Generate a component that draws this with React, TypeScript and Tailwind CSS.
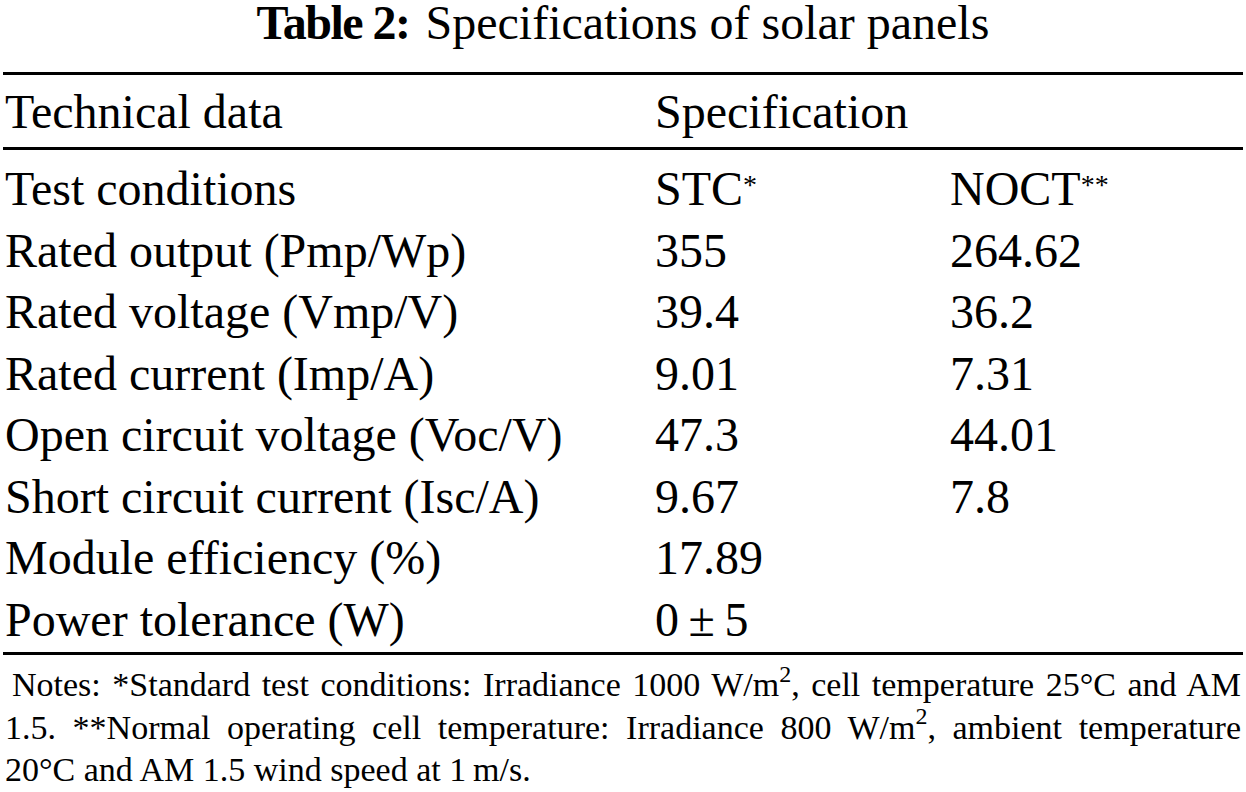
import React from 'react';

const rows: [string, React.ReactNode, React.ReactNode][] = [
  ['Rated output (Pmp/Wp)', '355', '264.62'],
  ['Rated voltage (Vmp/V)', '39.4', '36.2'],
  ['Rated current (Imp/A)', '9.01', '7.31'],
  ['Open circuit voltage (Voc/V)', '47.3', '44.01'],
  ['Short circuit current (Isc/A)', '9.67', '7.8'],
  ['Module efficiency (%)', '17.89', ''],
  ['Power tolerance (W)', '0\u2009±\u20095', ''],
];

function Row({ a, b, c }: { a: React.ReactNode; b: React.ReactNode; c: React.ReactNode }) {
  return (
    <div className="grid grid-cols-[650px_295px_1fr] h-[61.5px] leading-[61.5px] whitespace-nowrap">
      <div>{a}</div>
      <div>{b}</div>
      <div>{c}</div>
    </div>
  );
}

export default function App() {
  return (
    <div
      className="w-[1246px] h-[792px] bg-white text-black overflow-hidden"
      style={{ fontFamily: '"Liberation Serif", "Times New Roman", serif' }}
    >
      <div className="h-[72px] pt-[1px] leading-[44px] text-[48px] text-center">
        <span className="font-bold tracking-[-1.5px]">Table 2:</span>
        <span className="ml-[16px]">Specifications of solar panels</span>
      </div>

      <div className="mx-[3px] border-t-[3px] border-b-[3px] border-black">
        <div className="h-[72px] pt-[6px] pl-[2px] text-[48px] leading-[61.5px]">
          <div className="grid grid-cols-[650px_295px_1fr]">
            <div>Technical data</div>
            <div>Specification</div>
            <div></div>
          </div>
        </div>
      </div>

      <div className="mx-[3px] border-b-[3px] border-black pl-[2px] pt-[8px] pb-[2px] text-[48px]">
        <Row
          a="Test conditions"
          b={
            <>
              STC<sup className="text-[28px] top-[-0.4em]">*</sup>
            </>
          }
          c={
            <>
              NOCT<sup className="text-[28px] top-[-0.4em]">**</sup>
            </>
          }
        />
        {rows.map(([a, b, c], i) => (
          <Row key={i} a={a} b={b} c={c} />
        ))}
      </div>

      <p className="mx-[5px] mt-[9px] text-[34px] leading-[42.5px] text-justify indent-[7px]">
        Notes: *Standard test conditions: Irradiance 1000 W/m
        <sup className="text-[24px] top-[-0.6em]">2</sup>, cell temperature 25°C and AM 1.5. **Normal operating cell
        temperature: Irradiance 800 W/m<sup className="text-[24px] top-[-0.6em]">2</sup>, ambient temperature 20°C and
        AM 1.5 wind speed at 1&#8201;m/s.
      </p>
    </div>
  );
}
